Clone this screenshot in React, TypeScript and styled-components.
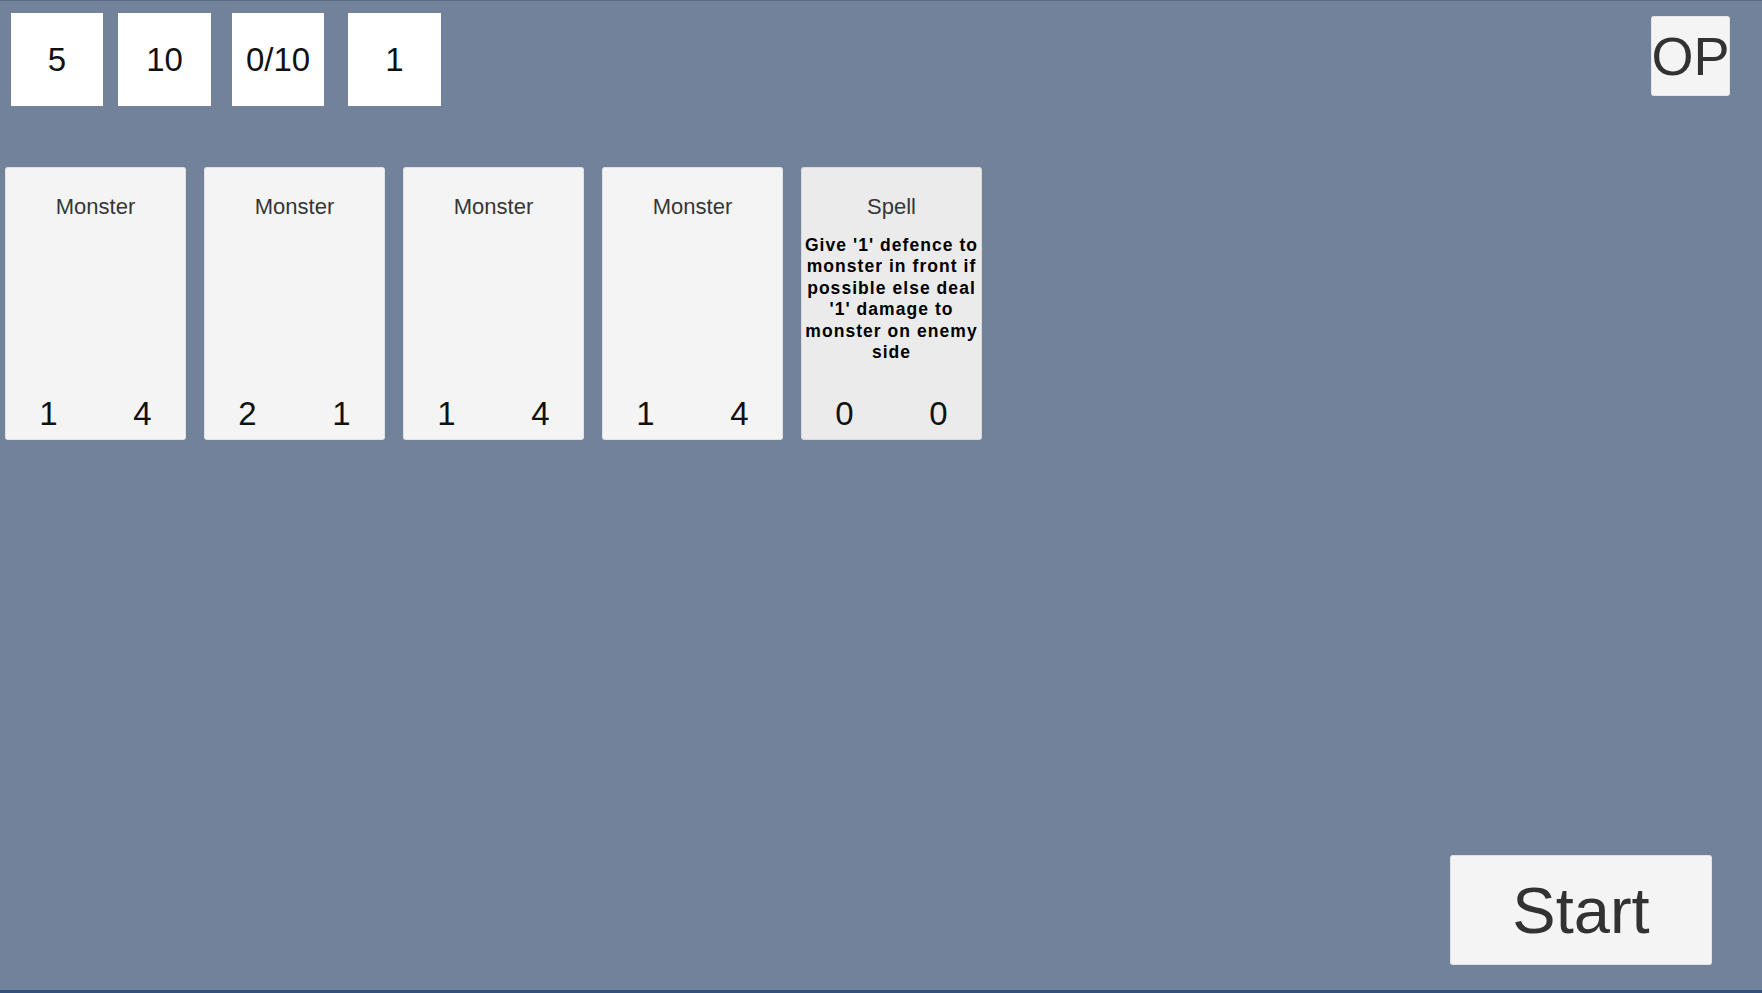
import React from "react";
import styled, { createGlobalStyle } from "styled-components";

const GlobalStyle = createGlobalStyle`
  html, body {
    margin: 0;
    padding: 0;
    background: #72829b;
  }
  body {
    font-family: "Liberation Sans", Arial, sans-serif;
  }
  * { box-sizing: border-box; }
`;

const Screen = styled.div`
  width: 1762px;
  height: 993px;
  display: flex;
  flex-direction: column;
  background: #72829b;
  border-top: 1px solid #5c6a80;
  border-bottom: 3px solid #33507c;
  overflow: hidden;
`;

const TopBar = styled.div`
  display: flex;
  justify-content: space-between;
  align-items: flex-start;
  padding: 12px 32px 0 0;
`;

const Stats = styled.div`
  display: flex;
`;

const StatBox = styled.div<{ $offset: number; $w: number }>`
  width: ${(p) => p.$w}px;
  height: 93px;
  margin-left: ${(p) => p.$offset}px;
  background: #ffffff;
  display: flex;
  align-items: center;
  justify-content: center;
  font-size: 33px;
  line-height: 1;
  color: #111111;
`;

const OPButton = styled.button`
  margin-top: 3px;
  width: 79px;
  height: 80px;
  padding: 0;
  border: none;
  border-radius: 3px;
  background: #f4f4f4;
  box-shadow: inset 0 0 0 1px rgba(0, 0, 0, 0.06);
  display: flex;
  align-items: center;
  justify-content: center;
  overflow: visible;
  white-space: nowrap;
  font-family: "Liberation Sans", Arial, sans-serif;
  font-size: 54px;
  line-height: 1;
  color: #323232;
`;

const CardRow = styled.div`
  display: flex;
  gap: 18px;
  padding-left: 5px;
  margin-top: 61px;
`;

const Card = styled.div<{ $spell?: boolean }>`
  width: 181px;
  height: 273px;
  border-radius: 3px;
  background: ${(p) => (p.$spell ? "#ebebeb" : "#f4f4f4")};
  box-shadow: inset 0 0 0 1px rgba(0, 0, 0, 0.07);
  display: flex;
  flex-direction: column;
  align-items: stretch;
  padding-top: 29px;
  padding-bottom: 10px;
`;

const CardTitle = styled.div`
  font-size: 22px;
  line-height: 1;
  text-align: center;
  color: #363636;
`;

const CardText = styled.div`
  margin-top: 17px;
  margin-left: -2px;
  margin-right: -2px;
  font-size: 17.5px;
  line-height: 21.4px;
  font-weight: bold;
  letter-spacing: 1.05px;
  text-align: center;
  color: #000000;
`;

const CardStats = styled.div`
  margin-top: auto;
  display: grid;
  grid-template-columns: 1fr 1fr;
  column-gap: 7px;
  font-size: 33px;
  line-height: 1;
  color: #111111;
  text-align: center;
`;

const Footer = styled.div`
  margin-top: auto;
  display: flex;
  justify-content: flex-end;
  padding: 0 50px 25px 0;
`;

const StartButton = styled.button`
  width: 262px;
  height: 110px;
  padding: 0;
  border: none;
  border-radius: 3px;
  background: #f4f4f4;
  box-shadow: inset 0 0 0 1px rgba(0, 0, 0, 0.07);
  display: flex;
  align-items: center;
  justify-content: center;
  font-family: "Liberation Sans", Arial, sans-serif;
  font-size: 65px;
  line-height: 1;
  color: #323232;
`;

type CardData = {
  title: string;
  text?: string;
  atk: number;
  def: number;
  spell?: boolean;
};

const stats = [
  { value: "5", offset: 11, w: 92 },
  { value: "10", offset: 15, w: 93 },
  { value: "0/10", offset: 21, w: 92 },
  { value: "1", offset: 24, w: 93 },
];

const cards: CardData[] = [
  { title: "Monster", atk: 1, def: 4 },
  { title: "Monster", atk: 2, def: 1 },
  { title: "Monster", atk: 1, def: 4 },
  { title: "Monster", atk: 1, def: 4 },
  {
    title: "Spell",
    text: "Give '1' defence to monster in front if possible else deal '1' damage to monster on enemy side",
    atk: 0,
    def: 0,
    spell: true,
  },
];

export default function App() {
  return (
    <>
      <GlobalStyle />
      <Screen>
        <TopBar>
          <Stats>
            {stats.map((s, i) => (
              <StatBox key={i} $offset={s.offset} $w={s.w}>
                {s.value}
              </StatBox>
            ))}
          </Stats>
          <OPButton>OP</OPButton>
        </TopBar>
        <CardRow>
          {cards.map((c, i) => (
            <Card key={i} $spell={c.spell}>
              <CardTitle>{c.title}</CardTitle>
              {c.text && <CardText>{c.text}</CardText>}
              <CardStats>
                <span>{c.atk}</span>
                <span>{c.def}</span>
              </CardStats>
            </Card>
          ))}
        </CardRow>
        <Footer>
          <StartButton>Start</StartButton>
        </Footer>
      </Screen>
    </>
  );
}
